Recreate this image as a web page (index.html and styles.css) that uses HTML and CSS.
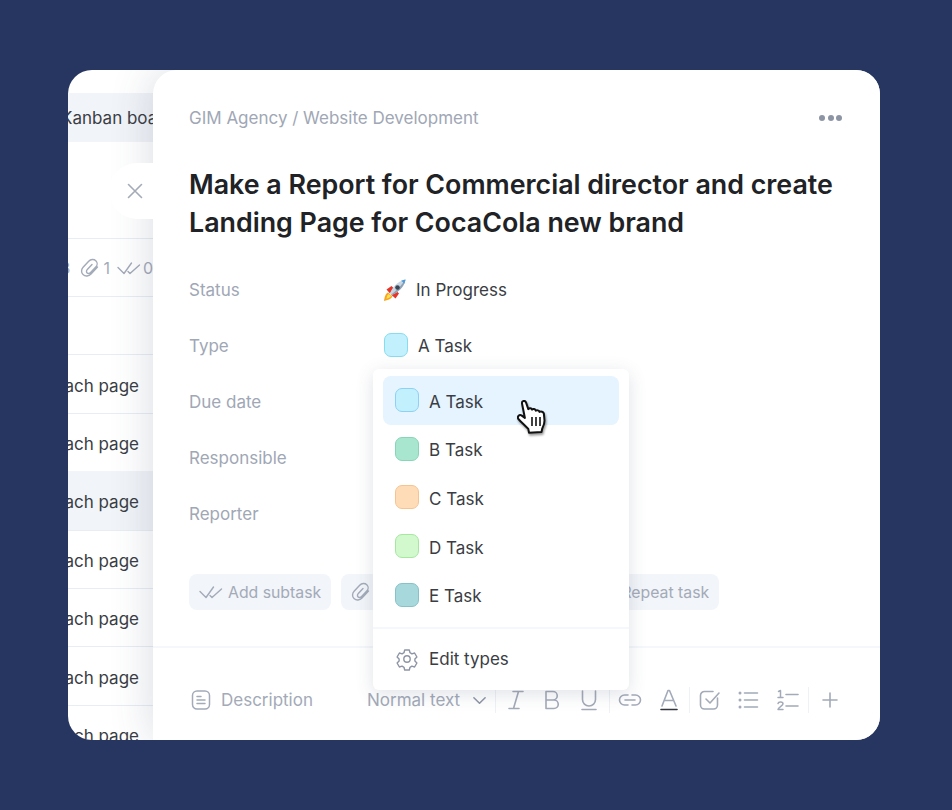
FILE: index.html
```html
<!DOCTYPE html>
<html lang="en">
<head>
    <meta charset="UTF-8">
    <meta name="viewport" content="width=device-width, initial-scale=1.0">
    <title>Task details</title>
    <link rel="stylesheet" href="styles.css">
</head>
<body>

<div class="frame">
    <div class="board">
        <div class="board-tab"><span>Kanban board</span></div>
        <div class="board-close">
            <div class="close-pill">
                <svg width="16" height="16" viewBox="0 0 16 16" fill="none" stroke="#a3aab8" stroke-width="1.6" stroke-linecap="round"><path d="M1.5 1.5l13 13M14.5 1.5l-13 13"/></svg>
            </div>
        </div>
        <div class="board-meta">
            <span class="meta-count">3</span>
            <svg class="meta-clip" width="20" height="20" viewBox="0 0 20 20" fill="none" stroke="#a3aab8" stroke-width="1.4" stroke-linecap="round"><path d="M17.500 9l-6.500 7c-2.200 2.400-5.800 2.600-8 .6-2-1.900-1.900-5.200.1-7.400l5.600-6c2-2.100 5.200-2.300 7.100-.5 1.800 1.700 1.700 4.500 0 6.300l-5.200 5.600c-1 1.100-2.600 1.200-3.500.3-.9-.9-.8-2.300.2-3.300l4.700-5"/></svg>
            <span>1</span>
            <svg class="meta-check" width="24" height="14" viewBox="0 0 24 14" fill="none" stroke="#a3aab8" stroke-width="1.4" stroke-linecap="round" stroke-linejoin="round"><path d="M1 6.500l6 6L14.500 2M11 10.500l2 2L22.500 4"/></svg>
            <span>0</span>
        </div>
        <div class="board-row"></div>
        <div class="board-row"><span>each page</span></div>
        <div class="board-row"><span>each page</span></div>
        <div class="board-row is-active"><span>each page</span></div>
        <div class="board-row"><span>each page</span></div>
        <div class="board-row"><span>each page</span></div>
        <div class="board-row"><span>each page</span></div>
        <div class="board-row"><span>each page</span></div>
    </div>

    <div class="panel">
        <div class="panel-head">
            <div class="crumbs">GIM Agency / Website Development</div>
            <div class="dots"><i></i><i></i><i></i></div>
        </div>
        <h1 class="title">Make a Report for Commercial director and create Landing Page for CocaCola new brand</h1>

        <div class="fields">
            <div class="field">
                <div class="field-label">Status</div>
                <div class="field-value">
                    <svg class="rocket" width="24" height="24" viewBox="0 0 24 24">
                        <path d="M5 14.500C2.500 15.500 1.500 19 1 23c3.500-.7 7-2 8.500-4.500z" fill="#f5a623"/>
                        <path d="M5.500 16C4.300 17 3.700 19 3.400 20.700c2-.4 3.900-1.300 4.800-2.600z" fill="#ffe14d"/>
                        <path d="M3.500 11.500L8.500 8l2 2-3.500 5.500z" fill="#e5352b"/>
                        <path d="M12.500 20.500L16 15.500l-2-2-5.500 3.500z" fill="#e5352b"/>
                        <path d="M7 15.500C9.500 9 14.500 3.500 22.500 1.500 21 9.500 15 14.500 8.500 17z" fill="#c9d6e2"/>
                        <path d="M8 16.500C12 14 18 8 22.500 1.500 21 9.500 15 14.500 8.500 17z" fill="#8fa3b5"/>
                        <path d="M18 2.700c1 .5 2.500 2 3.200 3.300.7-1.500 1.100-3 1.300-4.500-1.500.2-3 .6-4.500 1.200z" fill="#4f9bd9"/>
                        <circle cx="14.500" cy="9.500" r="2.300" fill="#3a4656"/>
                    </svg>
                    <span>In Progress</span>
                </div>
            </div>
            <div class="field">
                <div class="field-label">Type</div>
                <div class="field-value type-value">
                    <span class="swatch swatch-a2"></span>
                    <span>A Task</span>
                </div>
            </div>
            <div class="field"><div class="field-label">Due date</div></div>
            <div class="field"><div class="field-label">Responsible</div></div>
            <div class="field"><div class="field-label">Reporter</div></div>
        </div>

        <div class="chips">
            <div class="chip">
                <svg width="24" height="14" viewBox="0 0 24 14" fill="none" stroke="#a3aab8" stroke-width="1.4" stroke-linecap="round" stroke-linejoin="round"><path d="M1 6.500l6 6L14.500 2M11 10.500l2 2L22.500 4"/></svg>
                <span>Add subtask</span>
            </div>
            <div class="chip chip-attach">
                <svg width="20" height="20" viewBox="0 0 20 20" fill="none" stroke="#a3aab8" stroke-width="1.4" stroke-linecap="round"><path d="M17.500 9l-6.500 7c-2.200 2.400-5.800 2.600-8 .6-2-1.900-1.900-5.200.1-7.400l5.600-6c2-2.100 5.200-2.300 7.100-.5 1.800 1.700 1.700 4.500 0 6.300l-5.200 5.600c-1 1.100-2.600 1.200-3.500.3-.9-.9-.8-2.300.2-3.300l4.700-5"/></svg>
            </div>
            <div class="chip chip-repeat"><span>Repeat task</span></div>
        </div>

        <div class="editor">
            <div class="editor-label">
                <svg width="24" height="24" viewBox="0 0 24 24" fill="none" stroke="#a3aab8" stroke-width="1.5" stroke-linecap="round"><rect x="3.500" y="3" width="17" height="18" rx="4.500"/><path d="M8 8.500h4M8 12h8M8 15.500h8"/></svg>
                <span>Description</span>
            </div>
            <div class="toolbar">
                <div class="text-style">
                    <span>Normal text</span>
                    <svg width="15" height="15" viewBox="0 0 16 16" fill="none" stroke="#8d95a5" stroke-width="1.6" stroke-linecap="round" stroke-linejoin="round"><path d="M2 5l6 6 6-6"/></svg>
                </div>
                <div class="sep"></div>
                <div class="tools tools-tight">
                    <svg class="tool" viewBox="0 0 24 24"><path d="M9 3.500h10M5 20.500h10M14.500 3.500l-5 17"/></svg>
                    <svg class="tool" viewBox="0 0 24 24"><path d="M5 3.500h7a4.250 4.250 0 0 1 0 8.500H5zM5 12h8a4.250 4.250 0 0 1 0 8.500H5z"/></svg>
                    <svg class="tool" viewBox="0 0 24 24"><path d="M5.500 3v8.500a6.500 6.500 0 0 0 13 0V3M5 21.500h14"/></svg>
                </div>
                <div class="sep"></div>
                <div class="tools">
                    <svg class="tool" viewBox="0 0 24 24"><path d="M10 7H6.500a5 5 0 0 0 0 10H10M14 7h3.500a5 5 0 0 1 0 10H14M7 12h10"/></svg>
                    <svg class="tool" viewBox="0 0 24 24"><path d="M5 18L11 2.500h1.500L19 18M7.500 12.500h9"/><path class="tool-ink" d="M4 21.500h16"/></svg>
                </div>
                <div class="sep"></div>
                <div class="tools">
                    <svg class="tool" viewBox="0 0 24 24"><path d="M19.500 10v7a4 4 0 0 1-4 4h-9a4 4 0 0 1-4-4V7.500a4 4 0 0 1 4-4H15M8 11l4 4 9-10"/></svg>
                    <svg class="tool" viewBox="0 0 24 24"><path d="M7.500 5h13M7.500 12h13M7.500 19h13"/><circle class="tool-dot" cx="3" cy="5" r="1.500"/><circle class="tool-dot" cx="3" cy="12" r="1.500"/><circle class="tool-dot" cx="3" cy="19" r="1.500"/></svg>
                    <svg class="tool" viewBox="0 0 24 24"><path d="M10 6.500h12M10 18h12"/><path class="tool-thick" d="M2.500 3.500L4.500 2.500v7M2 9.500h5M2 15.500c.5-2 5-2 5 .3 0 2-4.500 3-5 5.700h5"/></svg>
                </div>
                <div class="sep"></div>
                <div class="tools tool-plus">
                    <svg class="tool" viewBox="0 0 24 24"><path d="M12 5v14M5 12h14"/></svg>
                </div>
            </div>
        </div>

        <div class="type-menu">
            <div class="type-item is-hover"><span class="swatch swatch-a"></span><span class="item-text">A Task</span></div>
            <div class="type-item"><span class="swatch swatch-b"></span><span class="item-text">B Task</span></div>
            <div class="type-item"><span class="swatch swatch-c"></span><span class="item-text">C Task</span></div>
            <div class="type-item"><span class="swatch swatch-d"></span><span class="item-text">D Task</span></div>
            <div class="type-item"><span class="swatch swatch-e"></span><span class="item-text">E Task</span></div>
            <div class="type-edit">
                <svg width="24" height="24" viewBox="0 0 24 24" fill="none" stroke="#8d95a5" stroke-width="1.4" stroke-linejoin="round"><path d="M9.700 3.500h4.600l.7 2.700 1.900 1.100 2.700-.8 2.300 4-2 1.900v2.200l2 1.900-2.300 4-2.700-.8-1.900 1.100-.7 2.700H9.700L9 20.800l-1.900-1.100-2.700.8-2.300-4 2-1.900v-2.200l-2-1.900 2.300-4 2.700.8L9 6.200z" transform="translate(0 -.5)"/><circle cx="12" cy="12" r="3.200"/></svg>
                <span>Edit types</span>
            </div>
        </div>

        <svg class="hand" width="30" height="34" viewBox="0 0 30 34">
            <path d="M5 3.500C4.500 1 8-.2 9 2.400l2.300 6.700c.9-1.300 3.200-1.100 3.800.5 1-1 3.100-.7 3.700 1 1.100-.8 3.100-.3 3.700 1.300 1.300-.7 4-.3 4.400 1.900l.6 6.700c0 3.800-1.300 5.900-2.200 7.800l-.8 3.700-12.500.7-.7-3.800c-3-3.100-6.900-6.700-9.700-9.600-1.900-2.200.6-5.400 3.200-3.700l3.100 2.400z" fill="#fff" stroke="#111" stroke-width="2" stroke-linejoin="round"/>
            <path d="M15 17v9M19 17v9M23 17v9" stroke="#111" stroke-width="1.600" fill="none"/>
        </svg>
    </div>
</div>

</body>
</html>
```

FILE: styles.css
```css
body {
    font-family: Inter, "Liberation Sans", sans-serif;
    background-color: #263660;
    margin: 0;
    padding: 70px 72px 70px 68px;
    color: #3a3d44;
}
.frame {
    display: flex;
    height: 670px;
    background-color: #fff;
    border-radius: 24px;
    overflow: hidden;
}

/* board behind the panel */
.board {
    width: 85px;
    flex-shrink: 0;
    overflow: hidden;
    padding-top: 23px;
    box-sizing: border-box;
}
.board-tab {
    display: flex;
    align-items: center;
    height: 49px;
    width: 85px;
    background-color: #f1f4f8;
    font-size: 17px;
    white-space: nowrap;
}
.board-tab span {
    margin-left: -7px;
}
.board-close {
    height: 96px;
    box-sizing: border-box;
    padding: 21px 0 0 41px;
}
.close-pill {
    position: relative;
    z-index: 2;
    display: flex;
    align-items: center;
    width: 70px;
    height: 56px;
    padding-left: 18px;
    box-sizing: border-box;
    border-radius: 28px;
    background-color: #fff;
}
.board-meta {
    display: flex;
    align-items: center;
    justify-content: flex-end;
    gap: 2px;
    height: 58px;
    width: 85px;
    border-top: 1px solid #e8edf3;
    font-size: 16px;
    color: #a3aab8;
    box-sizing: border-box;
    white-space: nowrap;
}
.meta-count {
    margin-right: 8px;
}
.meta-clip {
    flex-shrink: 0;
    margin-right: 1px;
}
.meta-check {
    margin-left: 5px;
    flex-shrink: 0;
}
.board-row {
    display: flex;
    align-items: center;
    justify-content: flex-end;
    height: 58.4px;
    box-sizing: border-box;
    padding: 3px 14px 0 0;
    border-top: 1px solid #e8edf3;
    font-size: 17px;
    white-space: nowrap;
}
.board-row.is-active {
    background-color: #f1f4f8;
    border-top-color: #f1f4f8;
}

/* task panel */
.panel {
    position: relative;
    z-index: 1;
    flex: 1;
    padding-top: 36px;
    background-color: #fff;
    border-radius: 24px 0 0 0;
    box-shadow: 0 0 44px rgba(60, 75, 105, 0.2);
}
.panel-head {
    display: flex;
    align-items: center;
    justify-content: space-between;
    padding: 0 38px 0 36px;
    height: 24px;
}
.crumbs {
    font-size: 17px;
    color: #a0a7b5;
}
.dots {
    display: flex;
    gap: 2.5px;
}
.dots i {
    width: 6px;
    height: 6px;
    border-radius: 50%;
    background-color: #8d95a5;
}
.title {
    margin: 35px 36px 0;
    font-size: 26.8px;
    line-height: 38px;
    font-weight: 600;
    color: #202226;
}
.fields {
    margin-top: 21px;
}
.field {
    display: flex;
    align-items: center;
    height: 56px;
    padding-left: 36px;
    font-size: 17px;
}
.field-label {
    width: 194px;
    color: #a0a7b5;
}
.field-value {
    display: flex;
    align-items: center;
    gap: 9px;
}
.type-value {
    gap: 10px;
    margin-left: 1px;
}
.swatch {
    display: block;
    width: 24px;
    height: 24px;
    box-sizing: border-box;
    border-radius: 7px;
    border: 1px solid;
}
.type-value .swatch {
    margin-top: -2px;
}
.swatch-a { background-color: #c2f0fc; border-color: #8fd0f5; }
.swatch-a2 { background-color: #c2f0fc; border-color: #86dcf0; }
.swatch-b { background-color: #a8e6cf; border-color: #86d6b8; }
.swatch-c { background-color: #ffdcb8; border-color: #f5c48f; }
.swatch-d { background-color: #d2f8cd; border-color: #a6e8a0; }
.swatch-e { background-color: #a6d8dc; border-color: #86c2c8; }

.chips {
    display: flex;
    gap: 10px;
    margin-top: 32px;
    padding-left: 36px;
}
.chip {
    display: flex;
    align-items: center;
    gap: 5px;
    height: 36px;
    padding: 0 10px;
    box-sizing: border-box;
    border-radius: 8px;
    background-color: #f2f5f9;
    font-size: 15.8px;
    color: #a3aab8;
}
.chip-attach {
    width: 160px;
}
.chip-repeat {
    flex-shrink: 0;
    width: 208px;
    justify-content: flex-end;
}
.editor {
    display: flex;
    align-items: center;
    margin-top: 36px;
    height: 106px;
    padding: 0 0 0 36px;
    border-top: 2px solid #f4f7fb;
    box-sizing: border-box;
}
.editor-label {
    display: flex;
    align-items: center;
    gap: 8px;
    width: 178px;
    font-size: 17px;
    color: #a3aab8;
}
.toolbar {
    display: flex;
    align-items: center;
    gap: 8px;
}
.text-style {
    display: flex;
    align-items: center;
    gap: 12px;
    font-size: 17px;
    color: #a3aab8;
}
.sep {
    width: 1px;
    height: 26px;
    background-color: #eef1f5;
}
.tools {
    display: flex;
    gap: 15px;
}
.tools-tight {
    gap: 12.5px;
}
.tool-plus {
    margin-left: 1px;
}
.tool {
    width: 24px;
    height: 24px;
    fill: none;
    stroke: #a3aab8;
    stroke-width: 1.6;
    stroke-linecap: round;
    stroke-linejoin: round;
}
.tool .tool-ink {
    stroke: #33363d;
}
.tool .tool-dot {
    fill: #a3aab8;
    stroke: none;
}
.tool .tool-thick {
    stroke-width: 1.5;
}

/* dropdown over the fields */
.type-menu {
    position: absolute;
    left: 220px;
    top: 299px;
    width: 256px;
    padding: 7px 10px 0;
    box-sizing: border-box;
    height: 321px;
    border-radius: 6px;
    background-color: #fff;
    box-shadow: 0 4px 18px rgba(60, 75, 105, 0.16);
}
.type-item {
    display: flex;
    align-items: center;
    gap: 10px;
    height: 48.6px;
    padding-left: 12px;
    border-radius: 8px;
    font-size: 17px;
}
.item-text {
    margin-top: 3px;
}
.type-item.is-hover {
    background-color: #e5f4fe;
}
.type-edit {
    display: flex;
    align-items: center;
    gap: 10px;
    margin: 8px -10px 0;
    height: 63px;
    padding-left: 22px;
    border-top: 2px solid #f4f7fb;
    box-sizing: border-box;
    font-size: 17px;
}
.hand {
    position: absolute;
    left: 364px;
    top: 330px;
    filter: drop-shadow(1px 2px 1px rgba(0, 0, 0, 0.4));
}
```
